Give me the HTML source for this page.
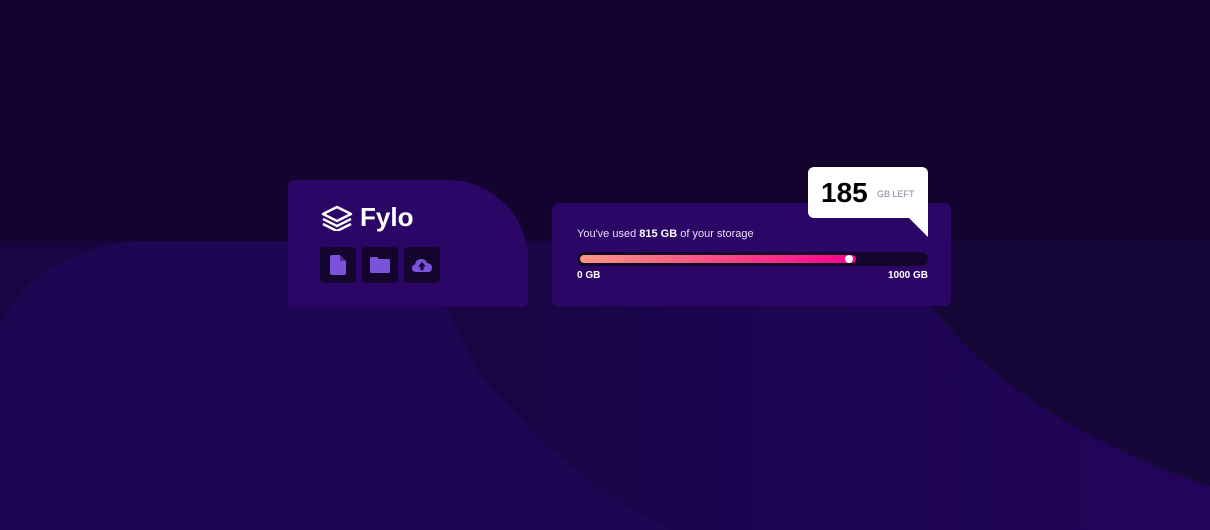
<!DOCTYPE html>
<html><head><style>
body{margin:0;width:1210px;height:530px;overflow:hidden;background:#12042f;font-family:"Liberation Sans",sans-serif;position:relative}
svg.bg{position:absolute;left:0;top:0}
.c1{position:absolute;left:288px;top:180px;width:240px;height:127px;background:#2b0666;border-radius:6px 80px 6px 6px}
.logo{position:absolute;left:32px;top:22px;color:#fff;font-weight:bold;font-size:26px;display:flex;align-items:center;gap:6px}
.btn{position:absolute;top:67px;width:36px;height:36px;background:#14052f;border-radius:4px;display:flex;align-items:center;justify-content:center}
.c2{position:absolute;left:552px;top:203px;width:399px;height:103px;background:#2b0666;border-radius:7px}
.t{position:absolute;left:25px;top:25px;color:#e5dcf5;font-size:11px}
.bar{position:absolute;left:25px;top:49px;width:351px;height:14px;background:#14052f;border-radius:7px}
.fill{position:absolute;left:3px;top:3px;width:276px;height:8px;border-radius:4px;background:linear-gradient(90deg,#fa9685,#ff0289)}
.dot{position:absolute;left:268px;top:3px;width:8px;height:8px;border-radius:50%;background:#fff}
.lab{position:absolute;top:67px;color:#fff;font-size:10px;font-weight:bold}
.bub{position:absolute;left:808px;top:167px;width:120px;height:51px;background:#fff;border-radius:6px 6px 0 6px}
.tail{position:absolute;left:908px;top:217px;width:0;height:0;border-left:20px solid transparent;border-top:20px solid #fff}
</style></head><body>
<svg class="bg" width="1210" height="530">
<defs><linearGradient id="g" x1="0" y1="0" x2="1" y2="0"><stop offset="0.4" stop-color="#170642"/><stop offset="0.6" stop-color="#1c0550"/><stop offset="1" stop-color="#22055a"/></linearGradient></defs>
<rect x="0" y="241" width="1210" height="289" fill="url(#g)"/>
<path d="M905 241 L1210 241 L1210 487 Q1080 440 1003 380 Q950 335 918 290Z" fill="#150839"/>
<path d="M0 325 Q40 245 150 241 L420 241 Q440 300 480 375 Q540 443 600 490 Q640 515 670 530 L0 530Z" fill="#1f0652"/>
</svg>
<div class="c1">
<div class="logo"><svg width="34" height="26" viewBox="0 0 34 26" fill="none" stroke="#fff" stroke-width="2.5" stroke-linejoin="round"><path d="M17 2 L31 9 L17 16 L3 9Z"/><path d="M3 14 L17 21 L31 14"/><path d="M3 19 L17 26 L31 19"/></svg>Fylo</div>
<div class="btn" style="left:32px"><svg width="16" height="20" viewBox="0 0 16 20"><path d="M2 0 H10 L16 6 V18 Q16 20 14 20 H2 Q0 20 0 18 V2 Q0 0 2 0Z" fill="#7b52da"/><path d="M10 0 V6 H16" fill="#4b2a9a"/></svg></div>
<div class="btn" style="left:74px"><svg width="20" height="16" viewBox="0 0 20 16"><path d="M0 1.5 Q0 0 1.5 0 H7 L9 2 H18.5 Q20 2 20 3.5 V14.5 Q20 16 18.5 16 H1.5 Q0 16 0 14.5Z" fill="#7b52da"/></svg></div>
<div class="btn" style="left:116px"><svg width="20" height="14" viewBox="0 0 20 14"><path d="M4 14 Q0 14 0 10 Q0 7 3 6.5 Q4 1 9 1 Q14 1 15 5 Q20 5.5 20 9.5 Q20 14 16 14Z" fill="#7b52da"/><path d="M10 4 L14 8.5 H11.5 V12 H8.5 V8.5 H6Z" fill="#14052f"/></svg></div>
</div>
<div class="c2">
<div class="t">You've used <b style="color:#fff">815 GB</b> of your storage</div>
<div class="bar"><div class="fill"></div><div class="dot"></div></div>
<div class="lab" style="left:25px">0 GB</div>
<div class="lab" style="right:23px">1000 GB</div>
</div>
<div class="bub"><span style="position:absolute;left:13px;top:10px;font-size:28px;font-weight:bold;color:#000">185</span><span style="position:absolute;left:69px;top:22px;font-size:9px;color:#8a8397">GB LEFT</span></div>
<div class="tail"></div>
</body></html>
